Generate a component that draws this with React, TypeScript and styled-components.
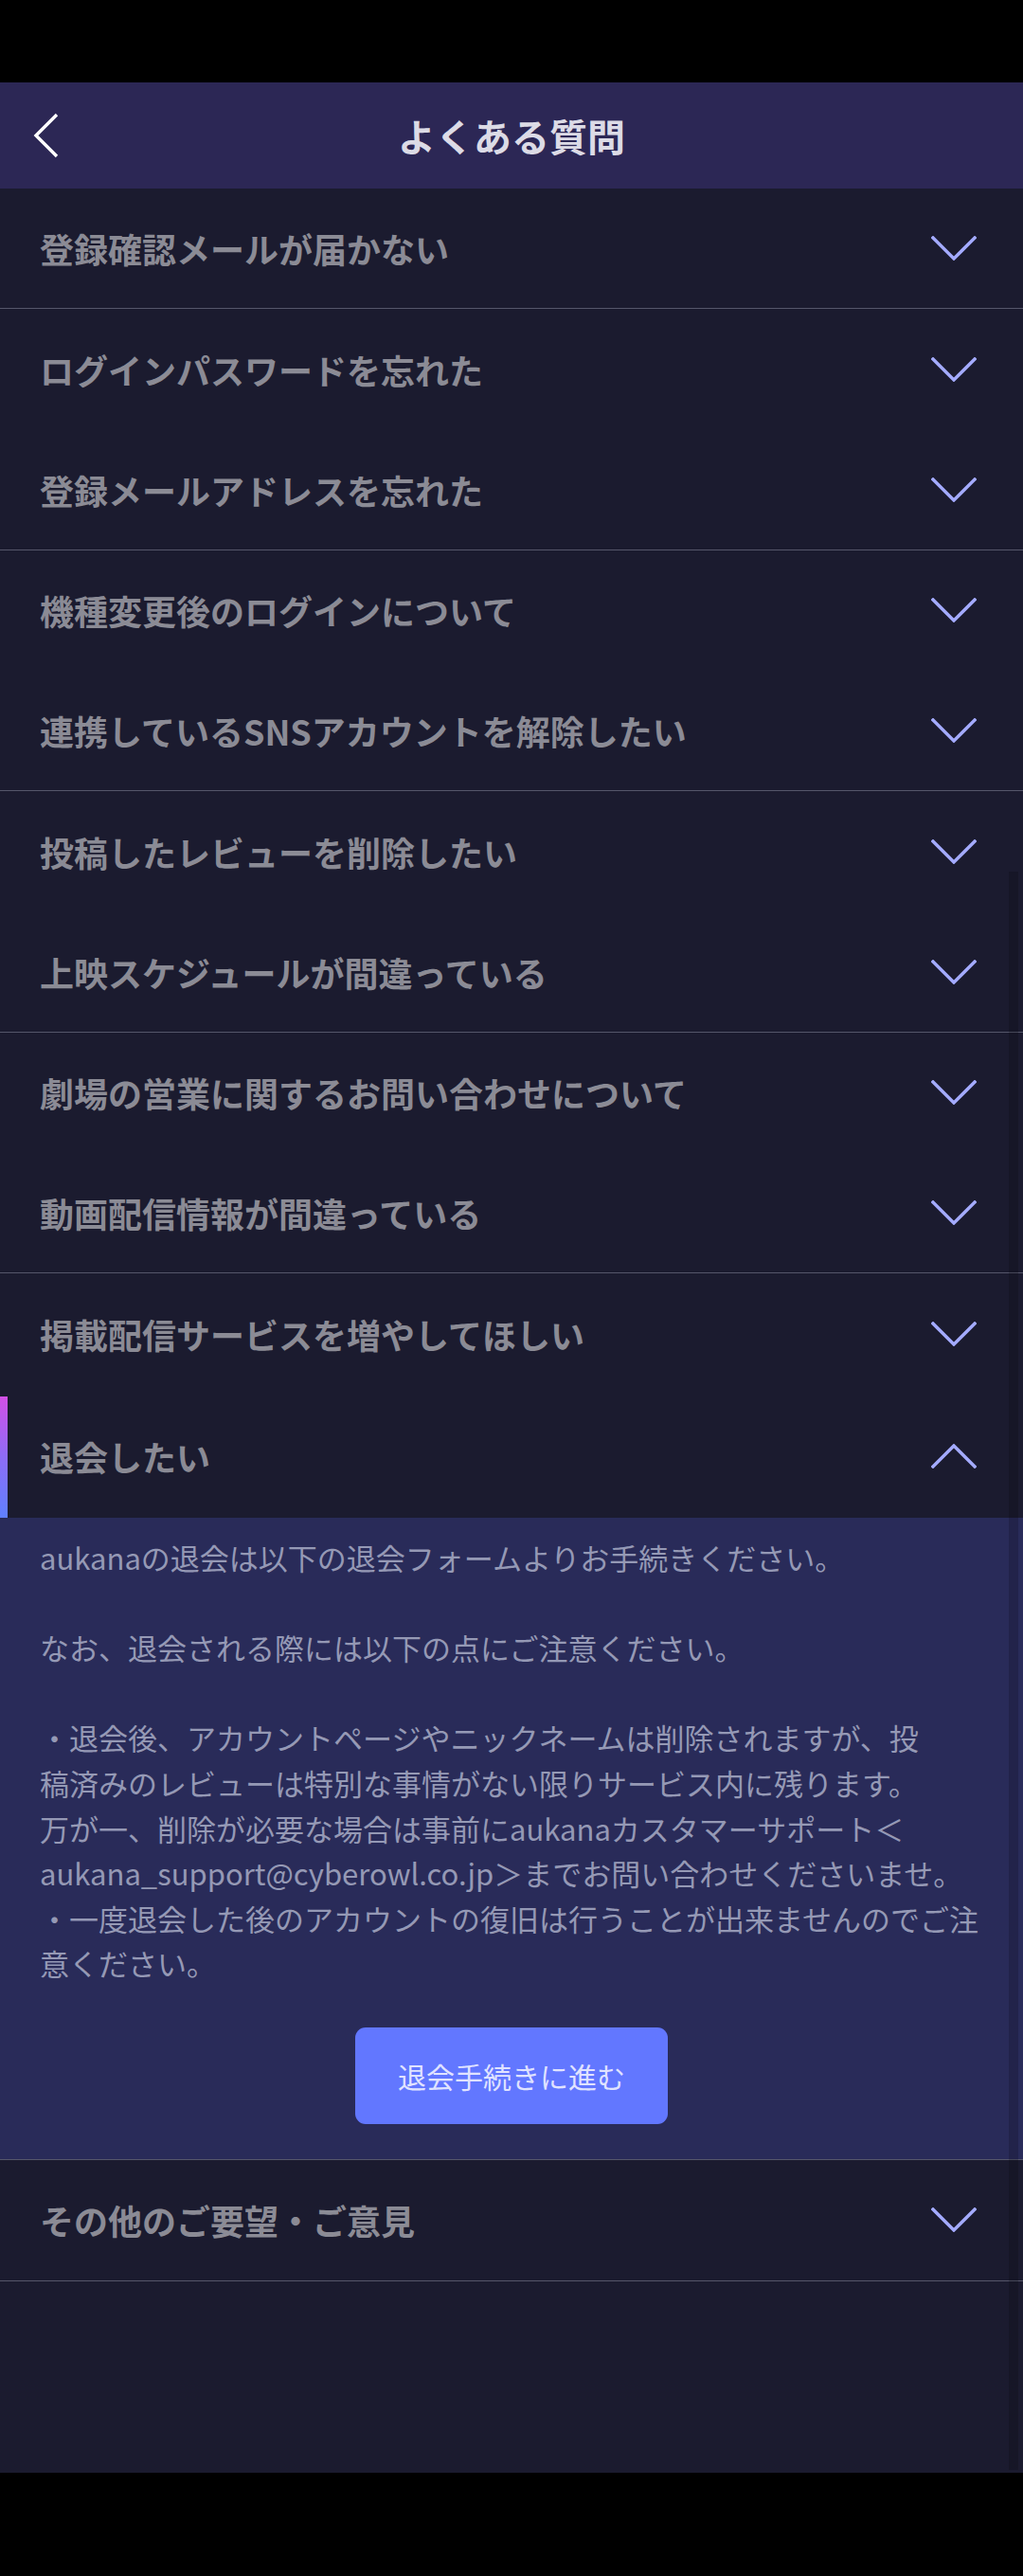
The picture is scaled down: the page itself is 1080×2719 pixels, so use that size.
import React from "react";
import styled, { createGlobalStyle } from "styled-components";

const GlobalStyle = createGlobalStyle`
  html, body {
    margin: 0;
    padding: 0;
    background: #000;
  }
  body {
    font-family: "Noto Sans CJK JP", "Noto Sans", sans-serif;
  }
`;

const Screen = styled.div`
  width: 1080px;
  height: 2719px;
  padding-top: 87px;
  box-sizing: border-box;
  background: #000;
`;

const AppFrame = styled.div`
  position: relative;
  height: 2523px;
  background: #1b1b2f;
  overflow: hidden;
`;

// scrollbar thumb sits over the list
const ScrollThumb = styled.div`
  position: absolute;
  right: 5px;
  top: 833px;
  width: 10px;
  height: 1687px;
  background: rgba(0, 0, 0, 0.17);
`;

const Header = styled.header`
  height: 112px;
  background: #2c2755;
  display: grid;
  grid-template-columns: 120px 1fr 120px;
  align-items: center;
`;

const BackButton = styled.button`
  justify-self: start;
  margin-left: 33px;
  padding: 0;
  border: 0;
  background: none;
  display: flex;
  cursor: pointer;
`;

const Title = styled.h1`
  margin: 0;
  text-align: center;
  font-size: 40px;
  font-weight: 700;
  color: #dcdbe6;
`;

const List = styled.div`
  display: flex;
  flex-direction: column;
`;

const Item = styled.div<{ $divider?: boolean }>`
  border-bottom: ${(p) => (p.$divider ? "1px solid #55566a" : "none")};
`;

const Question = styled.div<{ $open?: boolean; $h: number }>`
  position: relative;
  height: ${(p) => p.$h}px;
  box-sizing: border-box;
  display: flex;
  align-items: center;
  justify-content: space-between;
  padding: 0 49px 0 42px;
  cursor: pointer;

  &::before {
    content: "";
    display: ${(p) => (p.$open ? "block" : "none")};
    position: absolute;
    left: 0;
    top: 2px;
    bottom: 0;
    width: 8px;
    background: linear-gradient(180deg, #d250e6 0%, #8d6cf6 50%, #5f80ff 100%);
  }
`;

const QuestionText = styled.span`
  font-size: 36px;
  font-weight: 700;
  color: #8b8b95;
  white-space: nowrap;
`;

const Answer = styled.div`
  background: #292b59;
  padding: 18px 42px 37px;
  display: flex;
  flex-direction: column;
  align-items: center;
`;

const AnswerText = styled.p`
  align-self: stretch;
  margin: 0;
  font-size: 31px;
  line-height: 47.6px;
  color: #9599b5;
  white-space: pre;
`;

const ActionButton = styled.button`
  margin-top: 44px;
  width: 330px;
  height: 102px;
  border: 0;
  border-radius: 11px;
  background: #6277ff;
  color: #e0e3ff;
  font-family: "Noto Sans CJK JP", "Noto Sans", sans-serif;
  font-size: 30px;
  font-weight: 400;
  cursor: pointer;
`;

const Chevron = ({ up }: { up?: boolean }) => (
  <svg width="48" height="26" viewBox="0 0 48 26" fill="none">
    <path
      d={up ? "M2 24 L24 2 L46 24" : "M2 2 L24 24 L46 2"}
      stroke="#a4abff"
      strokeWidth="3.4"
      strokeLinecap="square"
    />
  </svg>
);

const BackIcon = () => (
  <svg width="30" height="48" viewBox="0 0 30 48" fill="none">
    <path d="M27 2 L5 24 L27 46" stroke="#ffffff" strokeWidth="3.4" />
  </svg>
);

const faqs = [
  "登録確認メールが届かない",
  "ログインパスワードを忘れた",
  "登録メールアドレスを忘れた",
  "機種変更後のログインについて",
  "連携しているSNSアカウントを解除したい",
  "投稿したレビューを削除したい",
  "上映スケジュールが間違っている",
  "劇場の営業に関するお問い合わせについて",
  "動画配信情報が間違っている",
  "掲載配信サービスを増やしてほしい",
];

const answer = [
  "aukanaの退会は以下の退会フォームよりお手続きください。",
  "",
  "なお、退会される際には以下の点にご注意ください。",
  "",
  "・退会後、アカウントページやニックネームは削除されますが、投",
  "稿済みのレビューは特別な事情がない限りサービス内に残ります。",
  "万が一、削除が必要な場合は事前にaukanaカスタマーサポート＜",
  "aukana_support@cyberowl.co.jp＞までお問い合わせくださいませ。",
  "・一度退会した後のアカウントの復旧は行うことが出来ませんのでご注",
  "意ください。",
].join("\n");

export default function App() {
  return (
    <>
      <GlobalStyle />
      <Screen>
        <AppFrame>
          <Header>
            <BackButton aria-label="戻る">
              <BackIcon />
            </BackButton>
            <Title>よくある質問</Title>
            <span />
          </Header>
          <List>
            {faqs.map((q, i) => (
              <Item key={q} $divider={i % 2 === 0}>
                <Question $h={i % 2 === 0 ? 126.25 : 127.25}>
                  <QuestionText>{q}</QuestionText>
                  <Chevron />
                </Question>
              </Item>
            ))}
            <Item $divider>
              <Question $open $h={130.5}>
                <QuestionText>退会したい</QuestionText>
                <Chevron up />
              </Question>
              <Answer>
                <AnswerText>{answer}</AnswerText>
                <ActionButton>退会手続きに進む</ActionButton>
              </Answer>
            </Item>
            <Item $divider>
              <Question $h={127}>
                <QuestionText>その他のご要望・ご意見</QuestionText>
                <Chevron />
              </Question>
            </Item>
          </List>
          <ScrollThumb />
        </AppFrame>
      </Screen>
    </>
  );
}
